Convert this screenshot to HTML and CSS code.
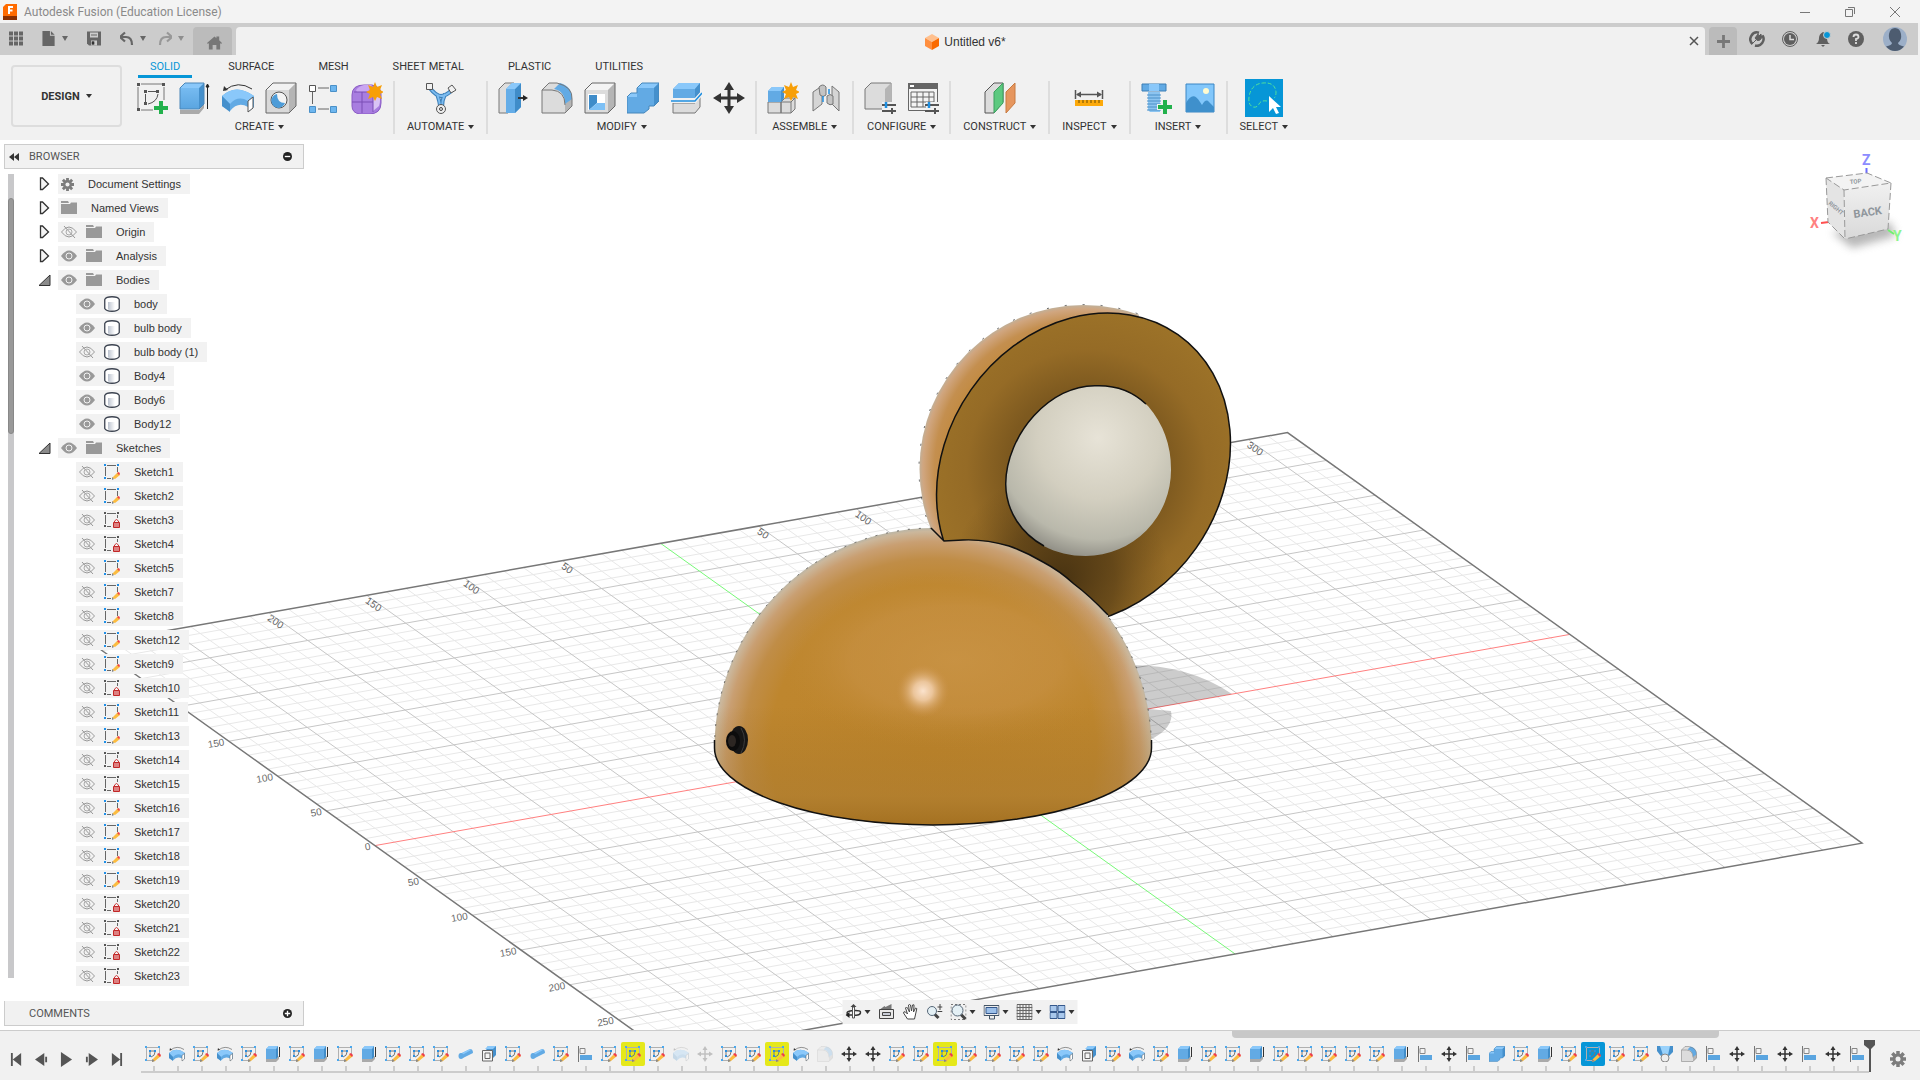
FILE: index.html
```html
<!DOCTYPE html>
<html lang="en">
<head>
<meta charset="utf-8">
<title>Autodesk Fusion (Education License)</title>
<link rel="stylesheet" href="styles.css">
</head>
<body>
<svg class="defs" aria-hidden="true">
  <defs>
    <linearGradient id="g-blue" x1="0" y1="0" x2="0" y2="1"><stop offset="0" stop-color="#7dc0f5"/><stop offset="1" stop-color="#5aa5e0"/></linearGradient>
    <linearGradient id="g-cyl" x1="0" x2="1"><stop offset="0" stop-color="#bcc3cf"/><stop offset="1" stop-color="#fff"/></linearGradient>
  </defs>

  <!-- ribbon tools, 32 x 32 -->
  <symbol id="t-sketch" viewBox="0 0 32 32"><path d="M5 2h21M2 5v21M5 28h12M28 5v13" stroke="#777" fill="none"/><path d="M1 1h3v3H1zM26 1h3v3h-3zM1 26h3v3H1zM8 8h3v3H8zM20 8h3v3h-3zM8 20h3v3H8z" fill="#555"/><path d="M12 9.500h8M9.500 12v8M22 12q-1 8-10 10" stroke="#555" fill="none"/><path d="M22 18h5v5h5v5h-5v5h-5v-5h-5v-5h5z" fill="#f1f1f1"/><path d="M23 19h4v5h5v4h-5v4h-4v-4h-5v-4h5z" fill="#22b14c"/></symbol>
  <symbol id="t-extrude" viewBox="0 0 32 32"><path d="M1 28h19l5-6v4l-5 6H1z" fill="#aaa"/><path d="M1 6l5-5h19l-5 5v21H1z" fill="url(#g-blue)"/><path d="M1 6l5-5h19l-5 5z" fill="#8ac8fa"/><path d="M20 6l5-5v21l-5 5z" fill="#4590cc"/><path d="M1 27V6l5-5h19v21l-5 5z" fill="none" stroke="#4a86b8"/><path d="M28.500 27V4M27 5l1.500-3L30 5z" stroke="#222" fill="#222"/></symbol>
  <symbol id="t-revolve" viewBox="0 0 32 32"><path d="M3 8Q16-2 30 7" fill="none" stroke="#333"/><path d="M1 9l1-5 4 4z" fill="#333"/><path d="M0 14q14-13 32 0v11l-6 5v-5q-10-6-18 4l-8-5z" fill="#62aae4"/><path d="M0 14q14-13 32 0l-6 5q-10-6-18 3z" fill="#8ac8fa"/><path d="M26 19l5-4v11l-5 4z" fill="#fff" stroke="#555"/><path d="M0 14l8 8v8l-8-6z" fill="#4590cc"/></symbol>
  <symbol id="t-hole" viewBox="0 0 32 32"><path d="M1 8l7-7h23v23l-7 7H1z" fill="#d9d9d9"/><path d="M1 8l7-7h23l-7 7z" fill="#f2f2f2"/><path d="M24 8l7-7v23l-7 7z" fill="#b5b5b5"/><path d="M1 31V8l7-7h23v23l-7 7z" fill="none" stroke="#666"/><circle cx="14" cy="18" r="8" fill="#f4f4f4" stroke="#555"/><path d="M12 12a7 7 0 1 0 8 9q-8 0-8-9" fill="#4d9cd8"/></symbol>
  <symbol id="t-pattern" viewBox="0 0 32 32"><path d="M10 6h11M4.500 10v12M10 27h11" stroke="#666"/><path d="M1.500 3.500h6v6h-6z" fill="#fff" stroke="#555"/><path d="M22.500 3.500h6v6h-6zM1.500 24.500h6v6h-6zM22.500 24.500h6v6h-6z" fill="#6db6ef" stroke="#4a90c8"/></symbol>
  <symbol id="t-form" viewBox="0 0 32 32"><path d="M1 13q0-10 12-10h8q10 2 9 10v8q0 11-12 11H9Q1 31 1 24z" fill="#a87de0" stroke="#8a5bc4"/><path d="M5 8q3-4 8-5h8l-4 7H6z" fill="#caa6f2"/><path d="M22 12l6-3q2 10 0 15l-6 5z" fill="#d9c3f5"/><path d="M11 10v21M1 20h21M3 10h19v20" stroke="#7b4fb5" fill="none"/><path d="M24 0l2 5 5-2-2 5 4 2-4 2 2 5-5-2-2 4-2-4-5 2 2-5-4-2 4-2-2-5 5 2z" fill="#f79f07"/></symbol>
  <symbol id="t-automate" viewBox="0 0 32 32"><path d="M4 5q7 9 12 9t11-6M12 12q3 8 3 13M20 12q-3 6-3 13" fill="none" stroke="#3c7fb8" stroke-width="4"/><path d="M4 5q7 9 12 9t11-6M12 12q3 8 3 13M20 12q-3 6-3 13" fill="none" stroke="#7cbcf0" stroke-width="2"/><path d="M1.500 1.500h6v6h-6z" fill="#f1f1f1" stroke="#555"/><path d="M27 3l4 5-5 3-3-5z" fill="#f1f1f1" stroke="#555"/><circle cx="16" cy="27" r="4.500" fill="#eee" stroke="#555"/><circle cx="16" cy="27" r="1.500" fill="none" stroke="#444"/></symbol>
  <symbol id="t-press" viewBox="0 0 32 32"><path d="M1 7l6-6h9v24l-6 6H1z" fill="#dedede" stroke="#777"/><path d="M8 7l6-6h9v24l-6 6H8z" fill="#64ade8"/><path d="M17 7l6-6v24l-6 6z" fill="#3f8cc9"/><path d="M8 7l6-6h9l-6 6z" fill="#8ac8fa"/><path d="M20 16h6" stroke="#333" stroke-width="2"/><path d="M25 13l5 3-5 3z" fill="#222"/></symbol>
  <symbol id="t-fillet" viewBox="0 0 32 32"><path d="M1 8l7-7h8q16 4 15 16v7l-7 7H1z" fill="#dcdcdc"/><path d="M24 22l7-6v8l-7 7z" fill="#b5b5b5"/><path d="M13 7l6-6q12 3 12 16l-7 5Q24 9 13 7z" fill="#62aae4"/><path d="M1 31V8l7-7h8q16 4 15 16v7l-7 7zM1 8h10q13 1 13 15" fill="none" stroke="#777"/></symbol>
  <symbol id="t-shell" viewBox="0 0 32 32"><path d="M1 8l7-7h23v23l-7 7H1z" fill="#dcdcdc"/><path d="M1 8l7-7h23l-7 7z" fill="#f4f4f4"/><path d="M24 8l7-7v23l-7 7z" fill="#b5b5b5"/><path d="M1 31V8l7-7h23v23l-7 7z" fill="none" stroke="#666"/><path d="M4 12h17v16H4z" fill="#fff"/><path d="M5 13l8 0v8l-8 7z" fill="#3f8cc9"/><path d="M13 21h8v7H5z" fill="#7dc0f5"/></symbol>
  <symbol id="t-combine" viewBox="0 0 32 32"><path d="M0 15l4-4h6V6l5-5h17v18l-5 5h-5v3l-5 4H0z" fill="#62aae4"/><path d="M10 6l5-5h17l-5 5z" fill="#8ac8fa"/><path d="M27 6l5-5v18l-5 5z" fill="#4590cc"/><path d="M0 15l4-4h6v4z" fill="#8ac8fa"/><path d="M0 15l4-4h6V6l5-5h17v18l-5 5h-5v3l-5 4H0z" fill="none" stroke="#4586ba"/></symbol>
  <symbol id="t-split" viewBox="0 0 32 32"><path d="M3 7l6-6h21v10l-5 5H3z" fill="#62aae4"/><path d="M3 7l6-6h21l-5 6z" fill="#8ac8fa"/><path d="M25 7l5-6v10l-5 5z" fill="#4590cc"/><path d="M3 21h22l5-6v10l-5 6H3z" fill="#dcdcdc" stroke="#777"/><path d="M1 19h24l7-8" fill="none" stroke="#f1f1f1" stroke-width="4"/><path d="M1 19h24l7-8" fill="none" stroke="#1f8fe0" stroke-width="1.500"/></symbol>
  <symbol id="t-move" viewBox="0 0 32 32"><path d="M16 5v22M5 16h22" stroke="#333" stroke-width="3"/><path d="M16 0l5 8H11zM16 32l5-8H11zM0 16l8-5v10zM32 16l-8-5v10z" fill="#333"/></symbol>
  <symbol id="t-newcomp" viewBox="0 0 32 32"><path d="M1 20h13v11H1zM14 20l4-4h10v11l-4 4H14z" fill="#dcdcdc" stroke="#777"/><path d="M14 20h10l4-4M24 20v11" stroke="#777" fill="none"/><path d="M1 9l4-4h12v11l-3 4H1z" fill="#62aae4"/><path d="M1 9l4-4h12l-3 4z" fill="#8ac8fa"/><path d="M14 9l3-4v11l-3 4z" fill="#4590cc"/><path d="M24 0l2 5 5-2-2 5 4 2-4 2 2 5-5-2-2 4-2-4-5 2 2-5-4-2 4-2-2-5 5 2z" fill="#f79f07"/></symbol>
  <symbol id="t-joint" viewBox="0 0 32 32"><path d="M3 10l9-6v18l-9 7zM29 10l-7-6v18l7 7z" fill="#d5d5d5" stroke="#777"/><path d="M9 5q4-4 7 0v8q-3 3-6 0zM17 14q3-3 6 0v8q-3 2-6-1z" fill="#c4c4c4" stroke="#777"/><path d="M13 14v6M19 7v5" stroke="#1f8fe0" stroke-width="1.500"/></symbol>
  <symbol id="t-config" viewBox="0 0 32 32"><path d="M1 7l6-6h20v20l-6 6H1z" fill="#dcdcdc" stroke="#777"/><path d="M21 7l6-6v20l-6 6z" fill="#b5b5b5"/><path d="M18 20h14v12H18z" fill="#f1f1f1"/><path d="M18 23h14M18 29h14M28 26v6" stroke="#555" stroke-width="2"/><path d="M22 20v6" stroke="#1f8fe0" stroke-width="2.500"/></symbol>
  <symbol id="t-table" viewBox="0 0 32 32"><path d="M1.500 1.500h29v27h-29z" fill="#f4f4f4" stroke="#666"/><path d="M1 1h30v6H1z" fill="#666"/><path d="M3 3h4v2H3z" fill="#fff"/><path d="M4 10h23v15H4zM4 15h23M4 20h23M10 10v15M16 10v15M22 10v15" fill="none" stroke="#666"/><path d="M19 20h13v12H19z" fill="#f1f1f1"/><path d="M18 23h14M18 29h14M28 26v6" stroke="#555" stroke-width="2"/><path d="M22 20v6" stroke="#1f8fe0" stroke-width="2.500"/></symbol>
  <symbol id="t-plane" viewBox="0 0 32 32"><path d="M1 10l9-9h9v19l-9 11H1z" fill="#dcdcdc" stroke="#555"/><path d="M10 10l9-9v20l-9 10z" fill="#5cc97f" stroke="#3ba05e"/><path d="M22 10l9-9v20l-9 10z" fill="#e6965e" stroke="#c87a40"/></symbol>
  <symbol id="t-measure" viewBox="0 0 32 32"><path d="M2.500 8v9M29.500 8v9M4 12.500h24" stroke="#555" stroke-width="1.500"/><path d="M3 12.500l5-3v6zM29 12.500l-5-3v6z" fill="#555"/><path d="M2 18h28v6H2z" fill="#fca90a"/><path d="M6 18v3M10 18v3M14 18v3M18 18v3M22 18v3M26 18v3" stroke="#6b4a00"/></symbol>
  <symbol id="t-bolt" viewBox="0 0 32 32"><path d="M1 2h24v7H1z" fill="#62aae4" stroke="#3d7fb5"/><path d="M8 2h10v7H8z" fill="#8ac8fa"/><path d="M7 10h12v20H9l-2-2z" fill="#8cc4f0"/><path d="M6 13h14M6 16h14M6 19h14M6 22h14M6 25h14M6 28h14" stroke="#4a90c8"/><path d="M21 17h6v5h5v6h-5v5h-6v-5h-5v-6h5z" fill="#f1f1f1"/><path d="M22 18h4v5h5v4h-5v5h-4v-5h-5v-4h5z" fill="#22b14c"/></symbol>
  <symbol id="t-image" viewBox="0 0 32 32"><path d="M2 2h28v28H2z" fill="#82c7fb" stroke="#3a86c4"/><path d="M2 21q7-13 14-1l2 3q4-7 7-3l5 5v5H2z" fill="#3f90cc"/><circle cx="22" cy="9" r="3" fill="#fffbd0"/></symbol>
  <symbol id="t-select" viewBox="0 0 38 38"><path d="M0 0h38v38H0z" fill="#0696d7"/><path d="M22 22q-6-1-8 3t-6 3q-5-2-4-10 2-13 14-14t13 9q0 5-2 6" fill="none" stroke="#54e39a" stroke-dasharray="4 2"/><path d="M24 17v16l4-4 3 6 3-1-3-6h5z" fill="#fff"/></symbol>

  <!-- timeline features, 16 x 16 -->
  <symbol id="f-sketch" viewBox="0 0 16 16"><path d="M2 1.500h12M2 14.500h8M1.500 2v12M14.500 2v7" stroke="#b0b0b0"/><path d="M0 0h2v2H0zM13 0h2v2h-2zM0 13h2v2H0z" fill="#4aa8ee"/><path d="M4 4h2v2H4zM9 4h2v2H9zM4 9h2v2H4z" fill="#2a8fe0"/><path d="M6 5h3M5 6v3M10 6q0 4-4 5" fill="none" stroke="#777"/><path d="M7 16l1-3 5-5 3 2-6 5z" fill="#fcbc41"/><path d="M12 8l2-1 2 2-1 2z" fill="#ee3d4a"/><path d="M7 16l0-3 3 2z" fill="#888"/></symbol>
  <symbol id="f-revolve" viewBox="0 0 16 16"><use href="#t-revolve" width="16" height="16"/></symbol>
  <symbol id="f-extrude" viewBox="0 0 16 16"><path d="M1 12h10l3-2v3l-3 3H1z" fill="#aaa"/><path d="M1 3l3-3h9l-2 3v10H1z" fill="#62aae4"/><path d="M1 3l3-3h9l-2 3z" fill="#8ac8fa"/><path d="M11 3l2-3v11l-2 2z" fill="#3f8cc9"/><path d="M14.500 1v10" stroke="#333"/></symbol>
  <symbol id="f-pipe" viewBox="0 0 16 16"><path d="M3 8l10-5q3 0 3 4L6 12z" fill="#62aae4"/><path d="M3 8l10-5 1 1L5 9z" fill="#8ac8fa"/><ellipse cx="4" cy="10" rx="2.500" ry="3" fill="#62aae4"/></symbol>
  <symbol id="f-shell" viewBox="0 0 16 16"><path d="M5 3l2-3h8v9l-3 3z" fill="#4590cc"/><path d="M4 3l3-3h8l-3 3z" fill="#8ac8fa"/><path d="M2 4.500h9.500V15H1.500V4.500zM4 7h5v5.500H4z" fill="#f5f5f5" stroke="#666"/></symbol>
  <symbol id="f-align" viewBox="0 0 16 16"><path d="M1.500 0v16" stroke="#777"/><path d="M3 2.500h5v5H3z" fill="#f4f4f4" stroke="#888"/><path d="M3 9h12v5H3z" fill="#5aa5e0"/></symbol>
  <symbol id="f-move" viewBox="0 0 16 16"><use href="#t-move" width="16" height="16"/></symbol>
  <symbol id="f-fillet" viewBox="0 0 16 16"><use href="#t-fillet" width="16" height="16"/></symbol>
  <symbol id="f-combine" viewBox="0 0 16 16"><use href="#t-combine" width="16" height="16"/></symbol>
  <symbol id="f-loft" viewBox="0 0 16 16"><path d="M0 0h16v6l-4 4-4 4-5-5-3-4z" fill="#4590cc"/><path d="M3 0h10l-2 9H6z" fill="#9ad2fb"/><circle cx="8" cy="12" r="4" fill="#eee" stroke="#888"/></symbol>

  <!-- browser tree -->
  <symbol id="b-gear" viewBox="0 0 16 16"><g stroke="#7d7d7d" stroke-width="3.500"><path d="M8 0v16M0 8h16M2.300 2.300l11.400 11.400M13.700 2.300L2.300 13.700"/></g><circle cx="8" cy="8" r="5.500" fill="#7d7d7d"/><circle cx="8" cy="8" r="2.500" fill="#f1f1f1"/></symbol>
  <symbol id="b-folder" viewBox="0 0 16 16"><path d="M0 1h7l1 2h-8zM0 4h9l1-1.500h6V14H0z" fill="#999"/></symbol>
  <symbol id="b-eye" viewBox="0 0 16 16"><path d="M0 8q8-11 16 0-8 11-16 0" fill="#999"/><circle cx="8" cy="8" r="3" fill="none" stroke="#f2f2f2"/></symbol>
  <symbol id="b-hidden" viewBox="0 0 16 16"><path d="M.5 8q7.500-10 15 0-7.500 10-15 0M3 2l11 12" fill="none" stroke="#999"/><circle cx="8" cy="8" r="3" fill="none" stroke="#aaa"/></symbol>
  <symbol id="b-body" viewBox="0 0 16 16"><path d="M.75 3.500Q2 .75 8 .75t7.250 2.750v9Q14 15.250 8 15.250T.75 12.500z" fill="#fff" stroke="#3c4350" stroke-width="1.300"/><path d="M4 6h7v8H6q-2 0-2-1z" fill="url(#g-cyl)"/></symbol>
  <symbol id="b-sketch" viewBox="0 0 16 16"><path d="M3 1.500h9M1.500 3v9M13.500 3v5M3 14.500h4" stroke="#666"/><path d="M0 0h2v2H0zM13 0h2v2h-2zM0 13h2v2H0z" fill="#1f8fe8"/><path d="M8 14l6-6 2 3-5 4z" fill="#fcbc41"/><path d="M13 9l2-1 1 2-1 1z" fill="#ee3d4a"/><path d="M8 13l2 2-2 1z" fill="#888"/></symbol>
  <symbol id="b-locked" viewBox="0 0 16 16"><path d="M3 1.500h9M1.500 3v9M13.500 3v3M3 14.500h4" stroke="#666"/><path d="M0 0h2v2H0zM13 0h2v2h-2zM0 13h2v2H0z" fill="#555"/><path d="M10.500 11V9q2-3 4 0v2" fill="none" stroke="#c33"/><path d="M9.500 10.500h6v5h-6z" fill="#dd8080" stroke="#c22727"/></symbol>
  <symbol id="b-closed" viewBox="0 0 12 16"><path d="M1.500 2v11.500h2L9.500 8l-6-6z" fill="#f4f4f4" stroke="#333" stroke-width="1.300"/></symbol>
  <symbol id="b-open" viewBox="0 0 12 16"><path d="M0 13.500L11 3v10.500z" fill="#8b8b8b" stroke="#333"/></symbol>
</svg>

<header class="titlebar">
  <svg class="app-logo" viewBox="0 0 14 16"><path d="M0 3l3-3h11v15l-1 1H0z" fill="#ff6b00"/><path d="M0 12h14v4H0z" fill="#8a2f00"/><path d="M5 2h5v2H7v1.500h2.500v2H7V10H5z" fill="#fff"/></svg>
  <h1>Autodesk Fusion (Education License)</h1>
  <div class="window-buttons">
    <button aria-label="Minimize"><svg viewBox="0 0 12 12"><path d="M1 6.500h10" stroke="#777"/></svg></button>
    <button aria-label="Restore"><svg viewBox="0 0 12 12"><path d="M1.500 3.500h7v7h-7zM4 1.500h6.500V8" fill="none" stroke="#777"/></svg></button>
    <button aria-label="Close window"><svg viewBox="0 0 12 12"><path d="M1 1l10 10M11 1L1 11" stroke="#777"/></svg></button>
  </div>
</header>

<nav class="filebar">
  <div class="quick">
    <button aria-label="Data panel"><svg class="i14" viewBox="0 0 14 14"><path d="M0 0h4v4H0zM5 0h4v4H5zM10 0h4v4h-4zM0 5h4v4H0zM5 5h4v4H5zM10 5h4v4h-4zM0 10h4v4H0zM5 10h4v4H5zM10 10h4v4h-4z" fill="#666"/></svg></button>
    <button class="with-caret" aria-label="File"><svg class="i14" viewBox="0 0 14 16"><path d="M0 0h8v5h5v11H0zM9 0l4 4H9z" fill="#666"/></svg><span class="caret soft"></span></button>
    <button aria-label="Save"><svg class="i14" viewBox="0 0 14 14"><path d="M0 0h14v14H2l-2-2z" fill="#666"/><path d="M3 1h8v5H3zM4 9h6v5H4z" fill="#ccc"/><path d="M4 3.500h6M5 10h2v3H5z" stroke="#666"/></svg></button>
    <button class="with-caret tight" aria-label="Undo"><svg class="i14" viewBox="0 0 14 14"><path d="M5 1L0 5.500 5 10M1 5.500h5q6 0 6 8" fill="none" stroke="#666" stroke-width="2.200"/></svg><span class="caret soft"></span></button>
    <button class="with-caret faded" aria-label="Redo"><svg class="i14" viewBox="0 0 14 14"><path d="M9 1l5 4.500L9 10M13 5.500H8q-6 0-6 8" fill="none" stroke="#777" stroke-width="2.200"/></svg><span class="caret soft"></span></button>
  </div>
  <button class="tab-home" aria-label="Home"><svg viewBox="0 0 16 14"><path d="M0 7l8-7 2 2V0h3v4l3 3-1 1-1-1v7h-4V9H6v5H2V7L1 8z" fill="#777"/></svg></button>
  <div class="tab-doc">
    <div class="doc-name"><svg viewBox="0 0 14 16"><path d="M0 4l7-4 7 4-7 4z" fill="#ffc08e"/><path d="M0 4l7 4v8l-7-4z" fill="#ff8f3f"/><path d="M14 4L7 8v8l7-4z" fill="#fa6a00"/></svg><span>Untitled v6*</span></div>
    <button class="doc-close" aria-label="Close document"><svg viewBox="0 0 10 10"><path d="M1 1l8 8M9 1L1 9" stroke="#555" stroke-width="1.500"/></svg></button>
  </div>
  <button class="tab-new" aria-label="New tab"><svg viewBox="0 0 14 14"><path d="M7 0v14M0 7h14" stroke="#777" stroke-width="3"/></svg></button>
  <div class="status">
    <button aria-label="Extensions"><svg viewBox="0 0 16 16"><path d="M3.500 13A6.700 6.700 0 0 1 10 1.700M13.500 4.500A6.700 6.700 0 0 1 6 14.500" fill="none" stroke="#5f5f5f" stroke-width="2.500"/><path d="M3 13l5-5M6 7l3-4 1 2 2-2 0 2 2 0-3 4q-3 2-5-2" fill="#5f5f5f" stroke="#5f5f5f"/></svg></button>
    <button aria-label="Job status"><svg viewBox="0 0 16 16"><circle cx="8" cy="8" r="7.500" fill="none" stroke="#5f5f5f"/><circle cx="8" cy="8" r="6" fill="#5f5f5f"/><path d="M8 4v4.500h4" fill="none" stroke="#ddd" stroke-width="1.500"/></svg></button>
    <button aria-label="Notifications"><svg viewBox="0 0 16 16"><path d="M1 13q3-2 3-6t4-6q4 1 4 6t3 6zM6 14h4l-2 2z" fill="#5f5f5f"/><circle cx="12" cy="4" r="3.500" fill="#0696d7" stroke="#ccc"/></svg></button>
    <button aria-label="Help"><svg viewBox="0 0 16 16"><circle cx="8" cy="8" r="8" fill="#5f5f5f"/><path d="M5.500 6q0-2.500 2.500-2.500T10.500 6Q10.500 7.500 8 8v2M8 11v2" fill="none" stroke="#ddd" stroke-width="1.800"/></svg></button>
    <button class="avatar" aria-label="Account"><svg viewBox="0 0 24 24"><circle cx="12" cy="12" r="12" fill="#9cafc8"/><path d="M6 7q1-6 6-6t6 6-3 9q0 2 6 3.500Q17 24 12 24t-9-4.500Q9 18 9 16 5 12 6 7" fill="#4d5c70"/></svg></button>
  </div>
</nav>

<section class="ribbon">
  <button class="workspace">DESIGN <span class="caret"></span></button>
  <div class="ribbon-body">
    <div class="ribbon-tabs">
      <button class="active">SOLID</button><button>SURFACE</button><button>MESH</button><button>SHEET METAL</button><button>PLASTIC</button><button>UTILITIES</button>
    </div>
    <div class="groups" id="groups"></div>
  </div>
</section>

<main class="stage">
  <svg class="scene" viewBox="0 140 1920 890" preserveAspectRatio="xMidYMid slice" role="img" aria-label="Lamp model on the ground grid">
    <defs>
      <radialGradient id="dome" gradientUnits="userSpaceOnUse" cx="933" cy="748" r="220"><stop offset="0" stop-color="#bd842b"/><stop offset=".74" stop-color="#be862e"/><stop offset=".86" stop-color="#c08d47"/><stop offset=".94" stop-color="#c99f72"/><stop offset=".985" stop-color="#cbb79c"/><stop offset="1" stop-color="#b9b5a6"/></radialGradient>
      <linearGradient id="domeLow" x1="0" y1="0" x2="0" y2="1"><stop offset=".6" stop-color="#9f6f20" stop-opacity="0"/><stop offset=".9" stop-color="#a8792f" stop-opacity=".5"/><stop offset="1" stop-color="#a37020" stop-opacity=".95"/></linearGradient>
      <radialGradient id="sheen"><stop offset="0" stop-color="#cb964a" stop-opacity=".75"/><stop offset=".6" stop-color="#c99348" stop-opacity=".55"/><stop offset="1" stop-color="#c08a35" stop-opacity="0"/></radialGradient>
      <radialGradient id="spot"><stop offset="0" stop-color="#fbe3cd"/><stop offset=".35" stop-color="#f2cfac" stop-opacity=".85"/><stop offset="1" stop-color="#c99048" stop-opacity="0"/></radialGradient>
      <radialGradient id="headBack" gradientUnits="userSpaceOnUse" cx="1083" cy="469" r="165"><stop offset=".75" stop-color="#c08632"/><stop offset=".9" stop-color="#c48f4f"/><stop offset=".97" stop-color="#d0a680"/><stop offset="1" stop-color="#bcb3a0"/></radialGradient>
      <radialGradient id="faceShade" gradientUnits="userSpaceOnUse" cx="1085" cy="472" r="160"><stop offset=".5" stop-color="#7d591f"/><stop offset=".75" stop-color="#956b26"/><stop offset="1" stop-color="#9c7228"/></radialGradient>
      <radialGradient id="faceDark" gradientUnits="userSpaceOnUse" cx="979" cy="514" r="110"><stop offset="0" stop-color="#3f2c0f" stop-opacity=".9"/><stop offset=".5" stop-color="#4d3613" stop-opacity=".6"/><stop offset="1" stop-color="#6a4a18" stop-opacity="0"/></radialGradient>
      <radialGradient id="bulb" gradientUnits="userSpaceOnUse" cx="1098" cy="438" r="135"><stop offset="0" stop-color="#e7e3d7"/><stop offset=".45" stop-color="#d3cfc0"/><stop offset=".75" stop-color="#b9b8ab"/><stop offset="1" stop-color="#75736d"/></radialGradient>
      <clipPath id="headClip"><path d="M900 280h360v360h-152V615Q1090 596 1074 584 1060 571 1043 562 1026 552 1009 546 985 539 963 540L944 541 931 528 900 524z"/></clipPath>
      <clipPath id="backClip"><path d="M900 280h239v35L1086 470 944 541 931 528 900 524z"/></clipPath>
    </defs>
    <g id="grid"></g>
    <path d="M1130 665Q1190 665 1232 694L1149 709 1171 711Q1175 728 1148 741L1100 700z" fill="#000" fill-opacity=".2"/>
    <g id="grid-labels"></g>
    <path d="M714.500 748a218.500 220 0 0 1 437 0A218.500 77 0 0 1 714.500 748" fill="url(#dome)"/>
    <ellipse cx="955" cy="660" rx="175" ry="90" fill="url(#sheen)"/>
    <path d="M714.500 748a218.500 220 0 0 1 437 0A218.500 77 0 0 1 714.500 748" fill="url(#domeLow)"/>
    <circle cx="923" cy="691" r="27" fill="url(#spot)"/>
    <path d="M714.500 748a218.500 220 0 0 1 437 0" fill="none" stroke="#222" stroke-dasharray="2 9" stroke-opacity=".6"/>
    <path d="M714.500 740v8A218.500 77 0 0 0 1151.500 748v-8" fill="none" stroke="#111" stroke-width="1.500"/>
    <g clip-path="url(#backClip)"><circle cx="1083.500" cy="469" r="164" fill="url(#headBack)"/><circle cx="1083.500" cy="469" r="164.500" fill="none" stroke="#222" stroke-dasharray="2 16" stroke-opacity=".7"/></g>
    <g clip-path="url(#headClip)">
      <ellipse cx="1083.500" cy="469" rx="164.300" ry="137.600" transform="rotate(-54.900 1083.500 469)" fill="url(#faceShade)"/>
      <ellipse cx="1083.500" cy="469" rx="164.300" ry="137.600" transform="rotate(-54.900 1083.500 469)" fill="url(#faceDark)" stroke="#111" stroke-width="1.500"/>
      <path d="M1097 385.700C1050 384 1006 435 1005.700 484 1006 525 1040 556 1085.700 556A85.500 86 0 0 0 1171 469Q1171 433 1148 406 1126 385 1097 385.700z" fill="url(#bulb)"/>
      <path d="M1146 404Q1126 385 1097 385.700C1050 384 1006 435 1005.700 484 1006 512 1022 534 1044 546" fill="none" stroke="#111" stroke-width="1.500"/>
    </g>
    <path d="M931 528l13 13 19-1Q985 539 1009 546 1026 552 1043 562 1060 571 1074 584 1090 596 1108 615" fill="none" stroke="#111" stroke-width="1.500"/>
    <ellipse cx="739" cy="740" rx="9" ry="14" fill="#161616"/><ellipse cx="733" cy="741" rx="7" ry="10" fill="#0c0c0c"/><ellipse cx="732" cy="741" rx="4" ry="6" fill="#2c2622"/><path d="M741 728q7 12 0 25" fill="none" stroke="#3b3b3b"/>
  </svg>

  <svg class="viewcube" viewBox="0 0 96 100" role="img" aria-label="View cube">
    <defs><filter id="soft" x="-50%" y="-50%" width="200%" height="200%"><feGaussianBlur stdDeviation="4"/></filter>
    <linearGradient id="cubeF" x1="0" y1="0" x2="0" y2="1"><stop offset="0" stop-color="#f1f1f1"/><stop offset="1" stop-color="#d9d9d9"/></linearGradient></defs>
    <path d="M20 82l20 16 44-12-6-14z" fill="#888" opacity=".6" filter="url(#soft)"/>
    <path d="M54.500 18v8" stroke="#6b6bff" stroke-width="2"/><path d="M9 73l8-1" stroke="#ff5050" stroke-width="2"/><path d="M76 80l6 4" stroke="#70f070" stroke-width="2"/>
    <path d="M14 28l41-5 24 10-47 7z" fill="#f3f3f3"/><path d="M14 28l18 12 1 49-17-17z" fill="#e4e4e4"/><path d="M32 40l47-7-3 46-43 10z" fill="url(#cubeF)"/>
    <path d="M14 28l41-5 24 10-47 7zM32 40l1 49-17-17-2-44M79 33l-3 46-43 10" fill="none" stroke="#999" stroke-dasharray="7 3"/>
    <text x="42" y="68" class="cube-face" transform="rotate(-8 42 68)">BACK</text>
    <text x="16" y="54" class="cube-small" transform="rotate(40 16 54)">RIGHT</text>
    <text x="38" y="34" class="cube-small" transform="rotate(-5 38 34)">TOP</text>
    <text x="50" y="15" class="axis axis-z">Z</text><text x="-2" y="78" class="axis axis-x">X</text><text x="81" y="91" class="axis axis-y">Y</text>
  </svg>

  <aside class="left">
    <div class="panel-head"><svg class="collapse" viewBox="0 0 10 8"><path d="M5 0v8L0 4zM10 0v8L5 4z" fill="#333"/></svg><h2>BROWSER</h2><button aria-label="Collapse browser"><svg viewBox="0 0 10 10"><circle cx="5" cy="5" r="5" fill="#222"/><path d="M2 5h6" stroke="#fff" stroke-width="1.500"/></svg></button></div>
    <div class="tree-wrap"><div class="scroll"><div class="thumb"></div></div><ul class="tree" id="tree"></ul></div>
    <div class="panel-head comments"><h2>COMMENTS</h2><button aria-label="Expand comments"><svg viewBox="0 0 10 10"><circle cx="5" cy="5" r="5" fill="#222"/><path d="M2 5h6M5 2v6" stroke="#fff" stroke-width="1.500"/></svg></button></div>
  </aside>

  <div class="navtools">
    <button aria-label="Orbit"><svg viewBox="0 0 16 16"><path d="M2 10Q0 7 8 6.500T15 9 8 11H2" fill="none" stroke="#333" stroke-width="1.500"/><path d="M4 8v6l-4-3z" fill="#222"/><path d="M7 3h2v11H7z" fill="#fff" stroke="#555"/><path d="M8 0l3 3H5z" fill="#444"/></svg><span class="caret"></span></button>
    <button aria-label="Look at"><svg viewBox="0 0 16 16"><path d="M2 5l4-3 1 1 6-3v5" fill="#777"/><path d="M1 5.500h14v9H1z" fill="#e8e8e8" stroke="#444"/><path d="M4 8.500h8v3H4z" fill="#c8ccd6" stroke="#444"/></svg></button>
    <button aria-label="Pan"><svg viewBox="0 0 16 16"><path d="M5 15L1 9q0-2 2-1l2 2L3 4q1-2 2 0l2 4-1-7q1-1 2 0l1 6 1-6q2-1 1.500 1L11 8l2-4q2 0 1 2l-2 9z" fill="#fff" stroke="#444"/></svg></button>
    <button aria-label="Zoom"><svg viewBox="0 0 16 16"><path d="M8 10l4 4" stroke="#444" stroke-width="3"/><circle cx="5.500" cy="7" r="4.500" fill="#e4f0f5" stroke="#567"/><path d="M11 3h5M13.500 0v6M11 7.500h5" stroke="#444"/></svg></button>
    <button aria-label="Fit"><svg viewBox="0 0 16 16"><path d="M.5.5h15v15H.5z" fill="none" stroke="#777" stroke-dasharray="2 2"/><path d="M10 10l5 5" stroke="#444" stroke-width="3"/><circle cx="7" cy="6.500" r="5.500" fill="#e4f0f5" stroke="#567"/></svg><span class="caret"></span></button>
    <button aria-label="Display settings"><svg viewBox="0 0 16 16"><path d="M.5 1.500h15v10H.5z" fill="#eee" stroke="#456"/><path d="M2.500 3.500h11v6h-11z" fill="#9cc0ea" stroke="#35588c"/><path d="M6 12v3h5v-3" fill="#eee" stroke="#456"/></svg><span class="caret"></span></button>
    <button aria-label="Grid and snaps"><svg viewBox="0 0 16 16"><path d="M.5.5h15v15H.5zM3.500 0v16M6.500 0v16M9.500 0v16M12.500 0v16M0 3.500h16M0 6.500h16M0 9.500h16M0 12.500h16" fill="#eee" stroke="#666"/></svg><span class="caret"></span></button>
    <button aria-label="Viewports"><svg viewBox="0 0 16 16"><path d="M.5 1.500h7v6h-7zM8.500 1.500h7v6h-7zM.5 8.500h7v6h-7zM8.500 8.500h7v6h-7z" fill="#a9c8ec" stroke="#35588c"/></svg><span class="caret"></span></button>
  </div>
</main>

<footer class="timeline">
  <div class="playback">
    <button aria-label="Go to start"><svg viewBox="0 0 14 16"><path d="M1 1h2v14H1zM12 1v14L3 8z" fill="#555"/></svg></button>
    <button aria-label="Step back"><svg viewBox="0 0 14 16"><path d="M10 1v14L0 8zM11 5h2v6h-2z" fill="#555"/></svg></button>
    <button aria-label="Play"><svg viewBox="0 0 14 16"><path d="M1 0l12 8-12 8z" fill="#555"/></svg></button>
    <button aria-label="Step forward"><svg viewBox="0 0 14 16"><path d="M4 1v14l10-7zM1 5h2v6H1z" fill="#555"/></svg></button>
    <button aria-label="Go to end"><svg viewBox="0 0 14 16"><path d="M11 1h2v14h-2zM2 1v14l9-7z" fill="#555"/></svg></button>
  </div>
  <div class="track">
    <ol id="features"></ol>
    <svg class="marker" viewBox="0 0 12 32"><path d="M0 0h11v5L7 9v23H5V9L0 5z" fill="#555"/></svg>
    <div class="hscroll"></div>
  </div>
  <button class="settings" aria-label="Timeline settings"><svg viewBox="0 0 16 16"><use href="#b-gear"/></svg></button>
</footer>
<script src="app.js"></script>
</body>
</html>
```
FILE: styles.css
```css
* { box-sizing: border-box; }
body { margin: 0; min-height: 100vh; display: flex; flex-direction: column; background: #f1f1f1; color: #333; font-family: "Liberation Sans", Arial, sans-serif; font-size: 11px; overflow: hidden; }
button { border: 0; padding: 0; margin: 0; background: none; color: inherit; font: inherit; display: flex; align-items: center; justify-content: center; }
h1, h2 { margin: 0; font-weight: 400; }
ul, ol { margin: 0; padding: 0; list-style: none; }
svg { display: block; }
.defs { position: absolute; width: 0; height: 0; }
.caret { width: 0; height: 0; border: 3px solid transparent; border-top: 4px solid #333; border-bottom: 0; }
.caret.soft { border-top: 5px solid #666; }

.titlebar { height: 23px; display: flex; align-items: center; background: #f3f3f3; padding: 0 19px 0 3px; }
.app-logo { width: 14px; height: 16px; }
.titlebar h1 { margin-left: 7px; font: 12px Roboto, sans-serif; color: #8a8a8a; }
.window-buttons { margin-left: auto; display: flex; gap: 33px; }
.window-buttons svg { width: 12px; height: 12px; }

.filebar { height: 32px; display: flex; align-items: flex-end; background: #ccc; margin-right: 2px; }
.quick { width: 193px; height: 31px; margin-bottom: 1px; padding-left: 9px; display: flex; align-items: center; gap: 19px; }
.quick .with-caret { gap: 6px; }
.quick .tight { margin-right: -7px; }
.quick .faded { opacity: .6; }
.i14 { width: 14px; height: 15px; }
.tab-home { width: 39px; height: 28px; background: #bbb; border-radius: 4px 4px 0 0; padding: 3px 0 0 3px; }
.tab-home svg { width: 15px; height: 14px; }
.tab-doc { flex: 1; height: 28px; margin: 0 4px; display: flex; align-items: center; background: #f1f1f1; border-radius: 4px 4px 0 0; padding-right: 6px; }
.doc-name { flex: 1; display: flex; justify-content: center; align-items: center; gap: 5px; font-size: 12px; padding: 1px 0 0 6px; }
.doc-name svg { width: 14px; height: 16px; }
.doc-close svg { width: 10px; height: 10px; }
.tab-new { width: 28px; height: 28px; background: #bbb; border-radius: 4px 4px 0 0; }
.tab-new svg { width: 13px; height: 13px; }
.status { height: 32px; display: flex; align-items: center; gap: 17px; padding: 0 11px 0 12px; }
.status svg { width: 16px; height: 16px; }
.status .avatar { margin-left: 2px; }
.status .avatar svg { width: 24px; height: 24px; }

.ribbon { height: 85px; display: flex; background: #f1f1f1; font-family: Roboto, sans-serif; }
.workspace { width: 111px; height: 62px; margin: 10px 0 0 11px; border: 2px solid #ddd; border-radius: 4px; font-weight: 700; gap: 6px; }
.ribbon-body { flex: 1; padding-left: 16px; }
.ribbon-tabs { display: flex; gap: 44px; height: 24px; }
.ribbon-tabs button { height: 23px; }
.ribbon-tabs .active { color: #0696d7; border-bottom: 3px solid #0696d7; padding: 2px 12px 0; margin-right: -8px; }
.groups { display: flex; padding-top: 2px; }
.group { display: flex; flex-direction: column; justify-content: space-between; align-items: center; height: 53px; padding: 1px 10px 0; border-right: 2px solid #ddd; }
.group:first-child { padding: 1px 10px 0 0; margin-left: -2px; }
.group.single { padding: 1px 12px 0; }
.group:last-child { border-right: 0; }
.tools { display: flex; gap: 11px; height: 32px; align-items: center; }
.tools svg { width: 32px; height: 32px; }
.tools .big svg { width: 38px; height: 38px; }
.group-label { gap: 4px; height: 15px; }

.stage { position: relative; flex: 1; display: flex; background: #fff; overflow: hidden; min-height: 890px; }
.scene { position: absolute; inset: 0; width: 100%; height: 100%; }
.grid-minor { stroke: #e8e8e8; stroke-width: 1; }
.grid-major { stroke: #c6c6c6; stroke-width: 1; }
.grid-edge { stroke: #777; stroke-width: 1.5; fill: none; }
.axis-red { stroke: #ff8080; }
.axis-green { stroke: #78f878; }
.grid-text { font: 10px "Liberation Sans", sans-serif; fill: #666; }
.viewcube { position: absolute; top: 10px; right: 12px; width: 96px; height: 100px; overflow: visible; }
.cube-face { font: 700 11px Roboto, sans-serif; fill: #8f969c; }
.cube-small { font: 700 6px Roboto, sans-serif; fill: #8f969c; }
.axis { font: 700 14px Roboto, sans-serif; }
.axis-z { fill: #8c8cff; }
.axis-x { fill: #ff8080; }
.axis-y { fill: #8cf58c; }

.left { position: relative; width: 304px; padding: 4px 0 4px 4px; display: flex; flex-direction: column; }
.panel-head { height: 25px; border: 1px solid #ccc; background: #f1f1f1; display: flex; align-items: center; padding: 0 11px 0 4px; }
.panel-head h2 { flex: 1; margin-left: 10px; font: 11px Roboto, sans-serif; color: #555; }
.panel-head svg { width: 10px; height: 10px; }
.panel-head button svg { width: 9px; height: 9px; }
.panel-head.comments { margin-top: auto; border-top: 0; }
.comments h2 { margin-left: 20px; }
.tree-wrap { display: flex; padding: 5px 0 0 4px; }
.scroll { width: 6px; margin-bottom: 12px; background: #c8c8ca; }
.thumb { margin-top: 24px; height: 236px; background: #999; border: 1px solid #888; border-radius: 3px; }
.tree li { height: 24px; padding-left: 25px; display: flex; }
.tree li.sub { padding-left: 62px; }
.twist { width: 12px; height: 16px; margin: 2px 7px 0 0; }
.chip { height: 20px; background: #f2f2f2; display: flex; align-items: center; padding: 0 9px 0 3px; gap: 9px; }
.chip svg { width: 16px; height: 16px; }
.chip .gear { width: 13px; height: 13px; }
.chip span { margin-left: 5px; white-space: nowrap; }

.navtools { position: absolute; bottom: 6px; left: 50%; transform: translateX(-50%); height: 24px; background: #f1f1f1; display: flex; align-items: center; gap: 8px; padding: 0 3px; }
.navtools svg { width: 16px; height: 16px; }
.navtools button { gap: 3px; }

.timeline { height: 50px; border-top: 1px solid #ccc; background: #f1f1f1; display: flex; }
.playback { width: 136px; padding: 7px 0 0 4px; display: flex; align-items: center; }
.playback button { width: 25px; }
.playback svg { width: 13px; height: 15px; }
.track { position: relative; flex: 1; display: flex; padding: 11px 0 0 5px; }
.track ol { display: flex; height: 31px; border-bottom: 2px solid #ccc; }
.track li { flex: none; width: 24px; height: 29px; border-bottom: 5px solid transparent; background: linear-gradient(#ccc, #ccc) 12px bottom / 2px 5px no-repeat border-box; }
.track button { width: 24px; height: 24px; }
.track button svg { width: 16px; height: 16px; }
.track .yellow { background: #e5e81a; border-radius: 2px; }
.track .selected { background: #0696d7; border-radius: 2px; }
.track .dim svg { opacity: .25; }
.marker { flex: none; width: 12px; height: 32px; margin: -2px 0 0 -5px; }
.hscroll { position: absolute; top: 0; left: 63%; width: 28%; height: 7px; background: #c8c8c8; border-radius: 0 0 4px 4px; }
.settings { width: 44px; padding-top: 7px; }
.settings svg { width: 16px; height: 16px; }
```
FILE: app.js
```js
const icon = (id, cls = '') => `<svg class="${cls}"><use href="#${id}"/></svg>`;

// Ribbon groups: label and its tools
const groupList = [
  ['CREATE', ['sketch', 'extrude', 'revolve', 'hole', 'pattern', 'form']],
  ['AUTOMATE', ['automate']],
  ['MODIFY', ['press', 'fillet', 'shell', 'combine', 'split', 'move']],
  ['ASSEMBLE', ['newcomp', 'joint']],
  ['CONFIGURE', ['config', 'table']],
  ['CONSTRUCT', ['plane']],
  ['INSPECT', ['measure']],
  ['INSERT', ['bolt', 'image']],
  ['SELECT', ['select']],
];
document.getElementById('groups').innerHTML = groupList.map(([name, tools]) =>
  `<div class="group${tools.length === 1 ? ' single' : ''}"><div class="tools">${tools.map(t =>
    `<button aria-label="${t}"${t === 'select' ? ' class="big"' : ''}>${icon('t-' + t)}</button>`).join('')}</div>
  <button class="group-label">${name}<span class="caret"></span></button></div>`).join('');

// Browser tree
const chip = (icons, text) => `<div class="chip">${icons.map(i => icon('b-' + i, i)).join('')}<span>${text}</span></div>`;
const folderRow = (arrow, icons, text) => `<li>${icon('b-' + arrow, 'twist')}${chip(icons, text)}</li>`;
const itemRow = (icons, text) => `<li class="sub">${chip(icons, text)}</li>`;
const bodies = ['body', 'bulb body', 'bulb body (1)', 'Body4', 'Body6', 'Body12'];
const sketches = [1, 2, 3, 4, 5, 7, 8, 12, 9, 10, 11, 13, 14, 15, 16, 17, 18, 19, 20, 21, 22, 23];
const locked = [3, 4, 10, 14, 15, 20, 21, 22, 23];
document.getElementById('tree').innerHTML =
  folderRow('closed', ['gear'], 'Document Settings') +
  folderRow('closed', ['folder'], 'Named Views') +
  folderRow('closed', ['hidden', 'folder'], 'Origin') +
  folderRow('closed', ['eye', 'folder'], 'Analysis') +
  folderRow('open', ['eye', 'folder'], 'Bodies') +
  bodies.map(b => itemRow([b.endsWith('(1)') ? 'hidden' : 'eye', 'body'], b)).join('') +
  folderRow('open', ['eye', 'folder'], 'Sketches') +
  sketches.map(n => itemRow(['hidden', locked.includes(n) ? 'locked' : 'sketch'], 'Sketch' + n)).join('');

// Timeline: one letter per feature
const kinds = { S: 'sketch', Y: 'sketch', X: 'sketch', R: 'revolve', r: 'revolve', E: 'extrude', P: 'pipe', H: 'shell', A: 'align', M: 'move', m: 'move', F: 'fillet', f: 'fillet', C: 'combine', L: 'loft' };
const states = { Y: 'yellow', X: 'selected', r: 'dim', m: 'dim', f: 'dim' };
const featureList = 'SRSRSESESESSSPHSPSASY' + 'SrmSSYRfMMSSYSSSSRHSRSESSES' + 'SSSSEAMACSESXSSLFAMAMAMA';
document.getElementById('features').innerHTML = [...featureList].map(k =>
  `<li><button class="${states[k] || ''}" aria-label="${kinds[k]}">${icon('f-' + kinds[k])}</button></li>`).join('');

// Ground grid: u and v are the screen steps of one minor cell
const centre = [943, 745.2], u = [19.59, -3.462], v = [9.737, 6.959];
const at = (i, j) => [centre[0] + i * u[0] + j * v[0], centre[1] + i * u[1] + j * v[1]];
const [i0, i1, j0, j1] = [-29, 32, -29, 30];
const line = (a, b, cls) => `<line x1="${a[0]}" y1="${a[1]}" x2="${b[0]}" y2="${b[1]}" class="${cls}"/>`;
let minor = '', major = '', axes = '';
for (let i = i0 + 1; i < i1; i++) {
  const l = c => line(at(i, j0), at(i, j1), c);
  if (i === 0) axes += l('axis-green'); else if (i % 5 === 0) major += l('grid-major'); else minor += l('grid-minor');
}
for (let j = j0 + 1; j < j1; j++) {
  const l = c => line(at(i0, j), at(i1, j), c);
  if (j === 0) axes += l('axis-red'); else if (j % 5 === 0) major += l('grid-major'); else minor += l('grid-minor');
}
const edge = `<polygon class="grid-edge" points="${[at(i0, j0), at(i1, j0), at(i1, j1), at(i0, j1)].join(' ')}"/>`;
document.getElementById('grid').innerHTML = minor + major + axes + edge;

const label = (x, y, turn, anchor, text) => `<text class="grid-text" text-anchor="${anchor}" transform="translate(${x} ${y}) rotate(${turn})">${text}</text>`;
let labels = '';
for (const k of [-3, -2, -1, 0, 1, 2, 3, 4, 5]) {
  const [x, y] = at(i0, k * 5);
  labels += label(x - 4, y + 4, -10, 'end', Math.abs(k * 50));
}
for (const k of [-4, -3, -2, -1, 1, 2, 6]) {
  const [x, y] = at(k * 5, j0);
  labels += label(x - 2, y + 7, 35, 'start', Math.abs(k * 50));
}
document.getElementById('grid-labels').innerHTML = labels;
```
